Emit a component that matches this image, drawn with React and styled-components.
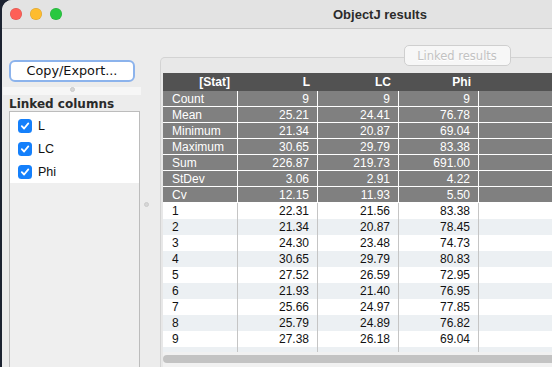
import React from "react";
import styled, { createGlobalStyle } from "styled-components";

const GlobalStyle = createGlobalStyle`
  html, body {
    margin: 0;
    padding: 0;
    width: 552px;
    height: 367px;
    overflow: hidden;
    background: #1c2331;
  }
  * { box-sizing: border-box; }
`;

const stats = [
  ["Count", "9", "9", "9"],
  ["Mean", "25.21", "24.41", "76.78"],
  ["Minimum", "21.34", "20.87", "69.04"],
  ["Maximum", "30.65", "29.79", "83.38"],
  ["Sum", "226.87", "219.73", "691.00"],
  ["StDev", "3.06", "2.91", "4.22"],
  ["Cv", "12.15", "11.93", "5.50"],
];

const rows = [
  ["1", "22.31", "21.56", "83.38"],
  ["2", "21.34", "20.87", "78.45"],
  ["3", "24.30", "23.48", "74.73"],
  ["4", "30.65", "29.79", "80.83"],
  ["5", "27.52", "26.59", "72.95"],
  ["6", "21.93", "21.40", "76.95"],
  ["7", "25.66", "24.97", "77.85"],
  ["8", "25.79", "24.89", "76.82"],
  ["9", "27.38", "26.18", "69.04"],
];

const Window = styled.div`
  margin-left: 2px;
  width: 550px;
  height: 367px;
  background: #ececec;
  border-top-left-radius: 10px;
  overflow: hidden;
  display: flex;
  flex-direction: column;
`;

const TitleBar = styled.div`
  height: 29px;
  flex-shrink: 0;
  display: flex;
  align-items: center;
  padding-left: 8px;
  background: #e3e3e3;
  border-bottom: 1px solid #c7c7c7;
`;

const Lights = styled.div`
  display: flex;
  gap: 8px;
`;

const Light = styled.span`
  width: 12px;
  height: 12px;
  border-radius: 50%;
  background: ${(p) => p.color};
  box-shadow: inset 0 0 0 0.5px rgba(0, 0, 0, 0.15);
`;

const Title = styled.div`
  margin-left: 271px;
  font-family: "Liberation Sans", Arial, sans-serif;
  font-weight: bold;
  font-size: 13px;
  color: #2b2b2b;
`;

const Content = styled.div`
  flex: 1;
  display: flex;
  min-height: 0;
`;

const LeftPane = styled.div`
  width: 131px;
  margin-left: 7px;
  flex-shrink: 0;
  display: flex;
  flex-direction: column;
  padding-top: 31px;
`;

const ExportButton = styled.button`
  width: 126px;
  height: 22px;
  padding: 0;
  background: #ffffff;
  border: 2px solid #8cb3ec;
  border-radius: 6px;
  font-family: "DejaVu Sans", sans-serif;
  font-size: 12.8px;
  color: #111;
  line-height: 16px;
`;

const HSplit = styled.div`
  margin: 5px -1px 0 -6px;
  height: 8px;
  background: #f6f6f6;
  display: flex;
  justify-content: center;
`;

const Grip = styled.span`
  width: 5px;
  height: 5px;
  border-radius: 50%;
  background: #d6d6d6;
  border: 1px solid #cacaca;
`;

const SectionLabel = styled.div`
  margin-top: 2px;
  font-family: "DejaVu Sans", sans-serif;
  font-weight: bold;
  font-size: 12px;
  line-height: 14px;
  color: #2a2a2a;
`;

const ColumnList = styled.div`
  flex: 1;
  border: 1px solid #bcbcbc;
  border-bottom: none;
  background: #efefef;
`;

const Items = styled.div`
  background: #ffffff;
  padding-top: 2px;
`;

const Item = styled.label`
  height: 23px;
  display: flex;
  align-items: center;
  gap: 6px;
  padding-left: 8px;
  font-family: "Liberation Sans", Arial, sans-serif;
  font-size: 12.5px;
  color: #111;
`;

const CheckBox = styled.span`
  width: 14px;
  height: 14px;
  border-radius: 3.5px;
  background: #1580fb;
  display: flex;
  align-items: center;
  justify-content: center;
`;

const VSplit = styled.div`
  width: 12px;
  flex-shrink: 0;
  display: flex;
  align-items: center;
  justify-content: center;
  padding-top: 12px;
`;

const RightPane = styled.div`
  width: 594px;
  flex-shrink: 0;
  margin-left: 8px;
  padding-top: 16px;
  display: flex;
  flex-direction: column;
`;

const TabRow = styled.div`
  display: flex;
  justify-content: center;
  margin-bottom: -9px;
  position: relative;
  z-index: 1;
`;

const Tab = styled.div`
  width: 107px;
  height: 21px;
  border: 1px solid #cfcfcf;
  border-radius: 5px;
  background: #f7f7f7;
  display: flex;
  align-items: center;
  justify-content: center;
  font-family: "DejaVu Sans", sans-serif;
  font-size: 11.5px;
  color: #c2c2c2;
  text-shadow: 0 1px 0 #ffffff;
`;

const Panel = styled.div`
  flex: 1;
  border: 1px solid #d3d3d3;
  border-bottom: none;
  border-radius: 5px 5px 0 0;
  background: #e8e8e8;
  padding: 15px 0 0 2px;
  display: flex;
  flex-direction: column;
`;

const Table = styled.div`
  height: 279px;
  overflow: hidden;
  font-family: "Liberation Sans", Arial, sans-serif;
  font-size: 12px;
`;

const Row = styled.div`
  display: grid;
  grid-template-columns: 75px 80px 81px 80px 1fr;
  height: ${(p) => (p.kind === "head" ? 18 : p.kind === "tail" ? 5 : 16)}px;
  background: ${(p) =>
    p.kind === "head"
      ? "#525252"
      : p.kind === "stat"
      ? "#808080"
      : p.kind === "odd"
      ? "#ffffff"
      : "#ecf0f3"};
  color: ${(p) => (p.kind === "head" || p.kind === "stat" ? "#ffffff" : "#111111")};
  font-weight: ${(p) => (p.kind === "head" ? "bold" : "normal")};
  border-bottom: ${(p) => (p.kind === "stat" ? "1px solid #ffffff" : "none")};
`;

const Cell = styled.div`
  display: flex;
  align-items: center;
  justify-content: ${(p) => (p.left ? "flex-start" : "flex-end")};
  padding: ${(p) => (p.left ? "0 0 0 9px" : "0 8px 0 0")};
  border-right: ${(p) => (p.line ? `1px solid ${p.line}` : "none")};
  white-space: nowrap;
  line-height: 1;
`;

const ScrollTrack = styled.div`
  height: 15px;
  background: #f1f1f1;
  padding-top: 3px;
`;

const ScrollThumb = styled.div`
  height: 8px;
  border-radius: 4px;
  background: #c3c3c3;
`;

function Check() {
  return (
    <svg width="10" height="10" viewBox="0 0 10 10">
      <path d="M1.8 5.2 L4.1 7.5 L8.3 2.4" fill="none" stroke="#fff" strokeWidth="1.8" strokeLinecap="round" strokeLinejoin="round" />
    </svg>
  );
}

function DataRow({ cells, kind }) {
  const line = kind === "head" ? null : kind === "stat" ? "#ffffff" : "#c5c5c5";
  return (
    <Row kind={kind}>
      <Cell left={kind !== "head"} line={line}>{cells[0]}</Cell>
      <Cell line={line}>{cells[1]}</Cell>
      <Cell line={line}>{cells[2]}</Cell>
      <Cell line={line}>{cells[3]}</Cell>
      <Cell />
    </Row>
  );
}

export default function App() {
  return (
    <>
      <GlobalStyle />
      <Window>
        <TitleBar>
          <Lights>
            <Light color="#fe5f57" />
            <Light color="#febc2e" />
            <Light color="#28c840" />
          </Lights>
          <Title>ObjectJ results</Title>
        </TitleBar>
        <Content>
          <LeftPane>
            <ExportButton>Copy/Export...</ExportButton>
            <HSplit><Grip /></HSplit>
            <SectionLabel>Linked columns</SectionLabel>
            <ColumnList>
              <Items>
                {["L", "LC", "Phi"].map((c) => (
                  <Item key={c}>
                    <CheckBox><Check /></CheckBox>
                    {c}
                  </Item>
                ))}
              </Items>
            </ColumnList>
          </LeftPane>
          <VSplit><Grip /></VSplit>
          <RightPane>
            <TabRow><Tab>Linked results</Tab></TabRow>
            <Panel>
              <Table>
                <DataRow kind="head" cells={["[Stat]", "L", "LC", "Phi"]} />
                {stats.map((r) => (
                  <DataRow key={r[0]} kind="stat" cells={r} />
                ))}
                {rows.map((r, i) => (
                  <DataRow key={r[0]} kind={i % 2 === 0 ? "odd" : "even"} cells={r} />
                ))}
                <DataRow kind="tail" cells={["", "", "", ""]} />
              </Table>
              <ScrollTrack><ScrollThumb /></ScrollTrack>
            </Panel>
          </RightPane>
        </Content>
      </Window>
    </>
  );
}
